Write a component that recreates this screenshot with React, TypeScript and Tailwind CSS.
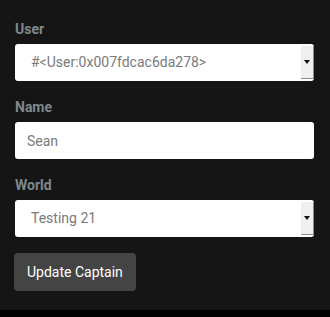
import { useState } from "react";

const Arrow = () => (
  <div className="flex h-full w-[13px] items-center justify-center border-r border-b border-[#8c8c8c] bg-[#efefef]">
    <svg width="6" height="4" viewBox="0 0 6 4">
      <path d="M0 0h6L3 4z" fill="#111" />
    </svg>
  </div>
);

const FakeSelect = ({ value }: { value: string }) => (
  <div className="flex h-[37px] w-full items-stretch overflow-hidden rounded-[3px] bg-white">
    <div className="flex flex-1 items-center pl-[16px] text-[14px] text-[#7a7a7a]">{value}</div>
    <div className="flex items-center py-[2px]">
      <div className="h-full">
        <Arrow />
      </div>
    </div>
  </div>
);

const Label = ({ children }: { children: string }) => (
  <label className="mb-[5px] block text-[14px] font-bold leading-[20px] text-[#7e888d]">{children}</label>
);

const App = () => {
  const [name, setName] = useState("Sean");

  return (
    <div className="w-[330px] bg-black pb-[7px]" style={{ fontFamily: "Roboto, 'Liberation Sans', sans-serif" }}>
      <div className="h-[310px] bg-[#151515] pl-[15px] pr-[16px] pt-[19px]">
        <div className="mb-[16px]">
          <Label>User</Label>
          <FakeSelect value="#<User:0x007fdcac6da278>" />
        </div>
        <div className="mb-[16px]">
          <Label>Name</Label>
          <input
            value={name}
            onChange={(e) => setName(e.target.value)}
            className="block h-[37px] w-full rounded-[3px] bg-white px-[12px] text-[14px] text-[#7a7a7a] outline-none"
          />
        </div>
        <div className="mb-[16px]">
          <Label>World</Label>
          <FakeSelect value="Testing 21" />
        </div>
        <button className="-ml-[1px] h-[38px] rounded-[4px] bg-[#444444] px-[13px] text-[14px] font-normal text-white">
          Update Captain
        </button>
      </div>
    </div>
  );
};

export default App;
